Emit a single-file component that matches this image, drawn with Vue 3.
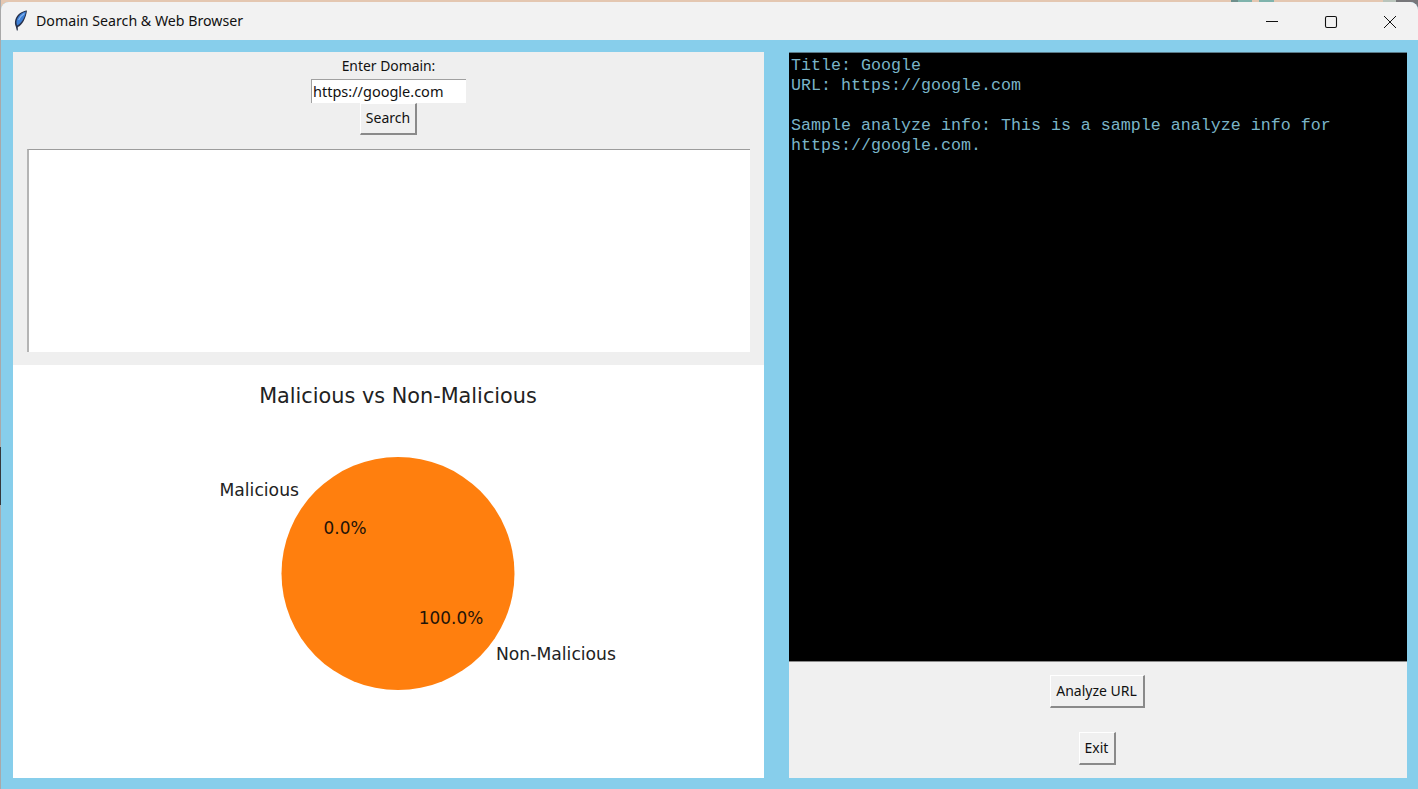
<script setup>
const infoLines = [
  'Title: Google',
  'URL: https://google.com',
  '',
  'Sample analyze info: This is a sample analyze info for',
  'https://google.com.',
]
</script>

<template>
  <div class="desktop">
    <div class="window">
      <div class="titlebar">
        <svg class="app-icon" width="14" height="22" viewBox="0 0 14 22">
          <path d="M13 0.5 C8 1 3 4.5 1.4 9.5 C0.6 12 0.8 14.5 1.8 16.5 L2.8 20.5 L3.8 20.5 L3.8 17 C8.4 15.4 12 8 13 0.5 Z" fill="#26304a" />
          <path d="M12 1.6 C8.2 2.4 4.4 5.5 2.8 10 C2.2 12 2.4 13.8 3.2 15.4 C7.4 13.6 10.9 7.6 12 1.6 Z" fill="#3d7fd6" />
          <path d="M10.4 3.5 C8 5 5.8 7.2 4.6 10" stroke="#8db9ee" stroke-width="1.1" fill="none" />
        </svg>
        <span class="app-title">Domain Search &amp; Web Browser</span>
        <div class="win-controls">
          <svg class="win-btn" width="58" height="38" viewBox="0 0 58 38"><path d="M22 19.5 H34" stroke="#111" fill="none" /></svg>
          <svg class="win-btn" width="58" height="38" viewBox="0 0 58 38"><rect x="23.5" y="14.5" width="11" height="11" rx="1.5" stroke="#111" stroke-width="1.1" fill="none" /></svg>
          <svg class="win-btn" width="58" height="38" viewBox="0 0 58 38"><path d="M24 14 L36 26 M36 14 L24 26" stroke="#111" fill="none" /></svg>
        </div>
      </div>

      <div class="content">
        <div class="left-col">
          <div class="search-panel">
            <label class="field-label">Enter Domain:</label>
            <input class="domain-input" type="text" value="https://google.com" />
            <button class="tk-btn search-btn">Search</button>
            <div class="browser-box"></div>
          </div>
          <div class="chart-panel">
            <svg class="pie" width="751" height="413" viewBox="0 0 751 413">
              <text class="chart-title" x="385" y="38" text-anchor="middle">Malicious vs Non-Malicious</text>
              <circle cx="385" cy="208.5" r="116.5" fill="#ff7f0e" />
              <text class="chart-label" x="286" y="131" text-anchor="end">Malicious</text>
              <text class="chart-label" x="483" y="295">Non-Malicious</text>
              <text class="chart-pct" x="332" y="169" text-anchor="middle">0.0%</text>
              <text class="chart-pct" x="438" y="259" text-anchor="middle">100.0%</text>
            </svg>
          </div>
        </div>

        <div class="right-col">
          <div class="info-box">
            <div v-for="(line, i) in infoLines" :key="i" class="info-line">{{ line }}</div>
          </div>
          <div class="actions">
            <button class="tk-btn analyze-btn">Analyze URL</button>
            <button class="tk-btn exit-btn">Exit</button>
          </div>
        </div>
      </div>
    </div>
  </div>
</template>

<style>
html, body {
  margin: 0;
  overflow: hidden;
  background: #e4c7b1;
}
</style>

<style scoped>
/* the desktop behind the window only shows along the top and left edges */
.desktop {
  width: 1418px;
  height: 789px;
  padding: 2px 0 0 1px;
  box-sizing: border-box;
  font-family: "Noto Sans", "Open Sans", sans-serif;
  background:
    linear-gradient(to bottom, #a9a9a9 0 447px, #34383c 447px 505px, #a9a9a9 505px) left / 1px 100% no-repeat,
    linear-gradient(to right, #e4c7b1 0 1231px, #6f8f8c 1231px 1238px, #7fb3ac 1238px 1252px, #e4c7b1 1252px 1259px, #7fb3ac 1259px 1274px, #e4c7b1 1274px 1383px, #b9c4bb 1383px 1396px, #77777a 1396px) top / 100% 12px no-repeat;
}

.window {
  height: 787px;
  display: flex;
  flex-direction: column;
  border-radius: 8px 8px 0 0;
  overflow: hidden;
  background-color: #87ceeb;
}

.titlebar {
  height: 38px;
  flex-shrink: 0;
  display: flex;
  align-items: center;
  background-color: #f2f2f2;
  padding-left: 13px;
}

.app-icon {
  margin-right: 8px;
}

.app-title {
  font-size: 14.2px;
  color: #111;
  padding-bottom: 2px;
}

.win-controls {
  margin-left: auto;
  display: flex;
}

.content {
  flex: 1;
  display: flex;
  gap: 25px;
  padding: 12px 11px 11px 12px;
  min-height: 0;
}

.left-col {
  width: 751px;
  display: flex;
  flex-direction: column;
}

.search-panel {
  height: 313px;
  box-sizing: border-box;
  background-color: #efefef;
  display: flex;
  flex-direction: column;
  align-items: center;
  padding-top: 4px;
}

.field-label {
  height: 23px;
  line-height: 19px;
  font-size: 13.9px;
  color: #111;
}

.domain-input {
  width: 155px;
  height: 24px;
  box-sizing: border-box;
  border: none;
  border-top: 1px solid #a0a0a0;
  border-left: 1px solid #a0a0a0;
  outline: none;
  padding: 0 1px 1px;
  font-family: inherit;
  font-size: 14.5px;
  color: #111;
  background: #fff;
}

.tk-btn {
  box-sizing: border-box;
  border-style: solid;
  border-width: 1px 2px 2px 1px;
  border-color: #fff #8a8a8a #8a8a8a #fff;
  background-color: #f0f0f0;
  padding: 0 0 2px;
  font-family: inherit;
  font-size: 14px;
  color: #111;
}

.search-btn {
  width: 57px;
  height: 32px;
}

.browser-box {
  width: 723px;
  height: 203px;
  box-sizing: border-box;
  margin: 14px 0 0 -1px;
  background-color: #fff;
  border-top: 1px solid #9c9c9c;
  border-left: 2px solid #b4b4b4;
}

.chart-panel {
  flex: 1;
  background-color: #fff;
  min-height: 0;
}

.pie {
  display: block;
  font-family: "DejaVu Sans", sans-serif;
}

.chart-title {
  font-size: 20.8px;
  fill: #222;
}

.chart-label {
  font-size: 17.2px;
  fill: #222;
}

.chart-pct {
  font-size: 16.9px;
  fill: #1f1408;
}

.right-col {
  width: 618px;
  display: flex;
  flex-direction: column;
}

.info-box {
  height: 610px;
  flex-shrink: 0;
  box-sizing: border-box;
  background-color: #000;
  border-top: 1px solid #5a7a88;
  border-bottom: 1px solid #8a8a8a;
  padding: 3px 2px 4px;
  font-family: "Liberation Mono", monospace;
  font-size: 16.67px;
  line-height: 20px;
  color: #7ab4c8;
}

.info-line {
  height: 20px;
  white-space: pre;
}

.actions {
  flex: 1;
  background-color: #f0f0f0;
  display: flex;
  flex-direction: column;
  align-items: center;
  padding-top: 13px;
  padding-right: 2px;
  gap: 24px;
}

.analyze-btn {
  width: 95px;
  height: 33px;
}

.exit-btn {
  width: 37px;
  height: 33px;
}
</style>
